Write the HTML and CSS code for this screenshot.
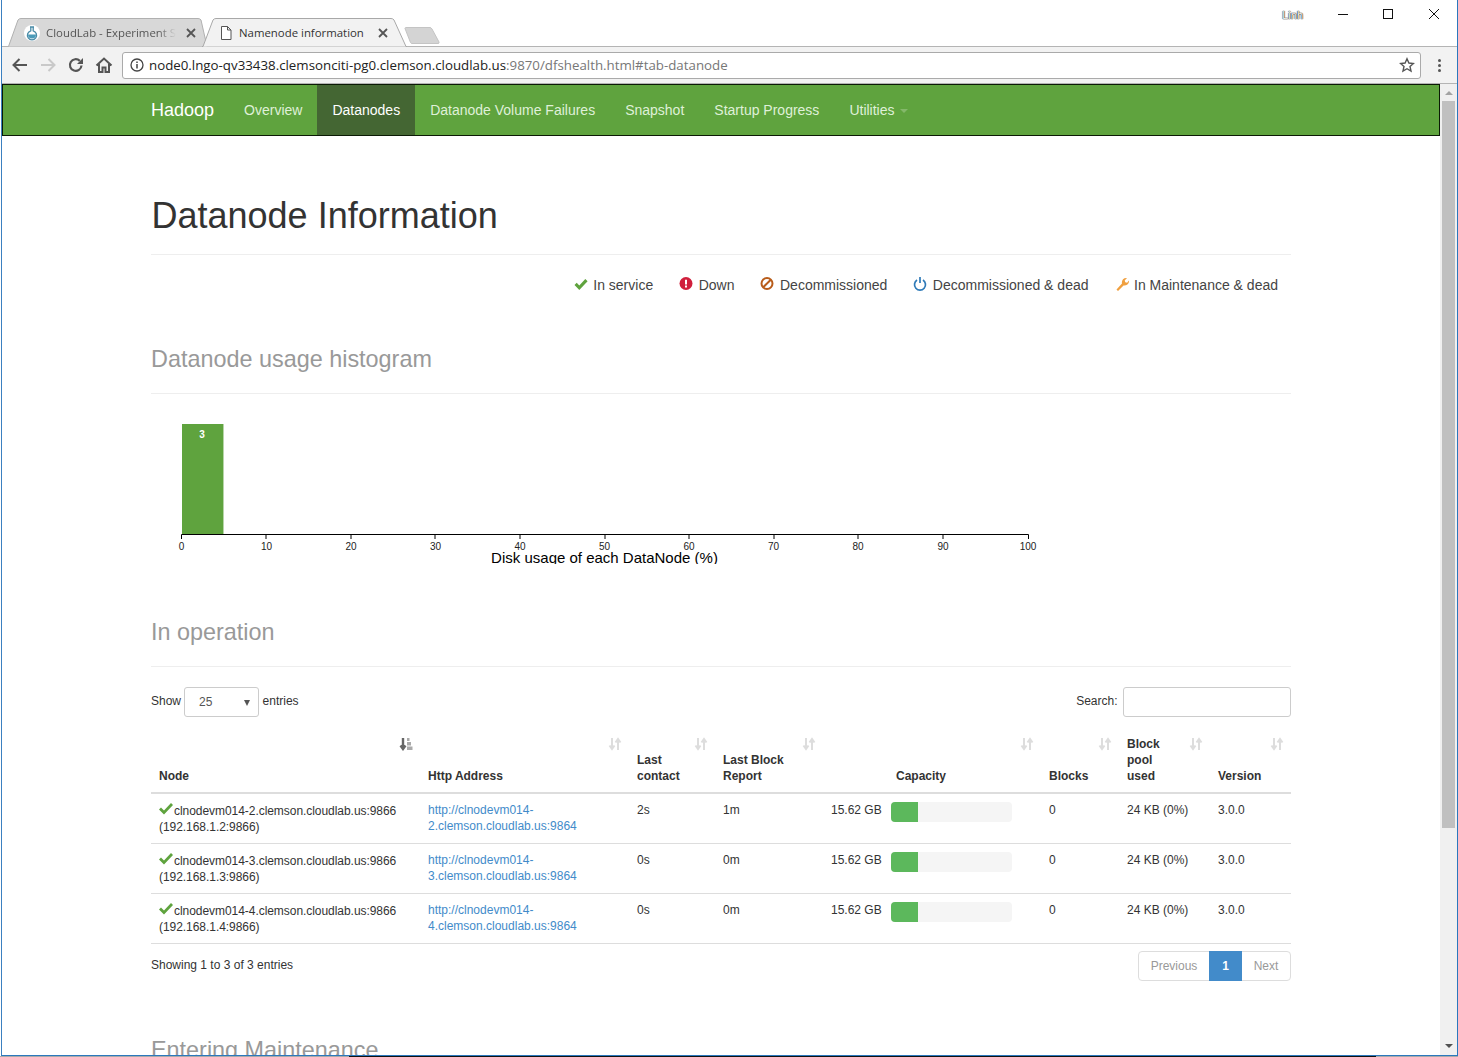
FILE: index.html
```html
<!DOCTYPE html>
<html lang="en">
<head>
  <meta charset="UTF-8">
  <title>Namenode information</title>
  <link rel="stylesheet" href="styles.css">
</head>
<body>
  <div class="window">
    <!-- Browser tabs and window buttons -->
    <div class="tabstrip">
      <div class="tab tab-inactive">
        <svg class="tab-shape" width="199" height="29" viewBox="0 0 199 29"><path d="M0.5 28.5 L10 2 Q11 0.5 13 0.5 L190 0.5 Q192 0.5 193 2 L199 28.5" fill="#d8d8d8" stroke="#b0b0b0"/></svg>
        <svg class="favicon" width="16" height="16" viewBox="0 0 16 16"><circle cx="8" cy="8" r="8" fill="#fff"/><path d="M6 2h4M6.8 2.500v3.300a4.600 4.600 0 1 0 2.400 0V2.500" fill="none" stroke="#4a8ca8" stroke-width="1.300"/><path d="M4 9.500h8a4 4 0 1 1-8 0z" fill="#4a9ab8"/></svg>
        <span class="tab-title tab-title-faded">CloudLab - Experiment S</span>
        <svg class="tab-close" width="10" height="10" viewBox="0 0 10 10"><path d="M1 1l8 8M9 1l-8 8" stroke="#555" stroke-width="1.800"/></svg>
      </div>
      <div class="tab tab-active">
        <svg class="tab-shape" width="205" height="29" viewBox="0 0 205 29"><path d="M0 28.5 L1 28.5 L11 2 Q12 0.5 14 0.5 L189 0.5 Q191 0.5 192 2 L204 28.5 L205 28.5" fill="#f2f2f2" stroke="#a8a8a8"/></svg>
        <svg class="favicon" width="16" height="16" viewBox="0 0 16 16"><path d="M3.500 1.500h6l3.500 3.500v9.500h-9.500zM9.500 1.500v3.500h3.500" fill="#fff" stroke="#555"/></svg>
        <span class="tab-title">Namenode information</span>
        <svg class="tab-close" width="10" height="10" viewBox="0 0 10 10"><path d="M1 1l8 8M9 1l-8 8" stroke="#555" stroke-width="1.800"/></svg>
      </div>
      <svg class="new-tab" width="36" height="18" viewBox="0 0 36 18"><path d="M1 1.500 Q1 0.500 2 0.500 L26 0.500 Q27 0.500 28 2 L35 15 Q35.500 16.500 34 16.500 L8 16.500 Q7 16.500 6.500 15.500z" fill="#d4d4d4" stroke="#c4c4c4"/></svg>
      <div class="spacer"></div>
      <span class="user-name">Linh</span>
      <div class="win-buttons">
        <svg width="12" height="12" viewBox="0 0 12 12"><path d="M1 6.500h10" stroke="#111"/></svg>
        <svg width="12" height="12" viewBox="0 0 12 12"><rect x="0.500" y="1.500" width="9" height="9" fill="none" stroke="#111"/></svg>
        <svg width="12" height="12" viewBox="0 0 12 12"><path d="M1 1l10 10M11 1L1 11" stroke="#111"/></svg>
      </div>
    </div>

    <!-- Address bar -->
    <div class="toolbar">
      <svg class="tool-icon" width="18" height="18" viewBox="0 0 18 18"><path d="M16 9H3M8.500 3L2.500 9l6 6" fill="none" stroke="#555" stroke-width="2"/></svg>
      <svg class="tool-icon" width="18" height="18" viewBox="0 0 18 18"><path d="M2 9h13M9.500 3l6 6-6 6" fill="none" stroke="#c9c9c9" stroke-width="2"/></svg>
      <svg class="tool-icon" width="18" height="18" viewBox="0 0 18 18"><path d="M14.500 9.500A5.800 5.800 0 1 1 12.800 4.900" fill="none" stroke="#555" stroke-width="2.200"/><path d="M10 8h6V2z" fill="#555"/></svg>
      <svg class="tool-icon" width="18" height="18" viewBox="0 0 18 18"><path d="M1.500 9.500L9 2.500l7.500 7M4 8v8h3.500v-4.500h3V16H14V8" fill="none" stroke="#555" stroke-width="2"/></svg>
      <div class="omnibox">
        <svg class="info-icon" width="14" height="14" viewBox="0 0 14 14"><circle cx="7" cy="7" r="6" fill="none" stroke="#444" stroke-width="1.300"/><path d="M7 6v4.500M7 3.500v1.500" stroke="#444" stroke-width="1.500"/></svg>
        <span class="url"><span class="url-host">node0.lngo-qv33438.clemsonciti-pg0.clemson.cloudlab.us</span>:9870/dfshealth.html#tab-datanode</span>
        <svg class="star-icon" width="16" height="16" viewBox="0 0 16 16"><path d="M8 1.800l1.900 4.200 4.500 0.500-3.400 3 1 4.500L8 11.700 4 14l1-4.500-3.400-3 4.500-0.500z" fill="none" stroke="#555" stroke-width="1.400"/></svg>
      </div>
      <div class="menu-dots"><i></i><i></i><i></i></div>
    </div>

    <div class="viewport">
      <div class="page">
        <nav class="navbar">
          <div class="nav-inner">
            <a class="brand">Hadoop</a>
            <a class="nav-link">Overview</a>
            <a class="nav-link nav-current">Datanodes</a>
            <a class="nav-link">Datanode Volume Failures</a>
            <a class="nav-link">Snapshot</a>
            <a class="nav-link">Startup Progress</a>
            <a class="nav-link">Utilities <b class="caret"></b></a>
          </div>
        </nav>

        <div class="container">
          <div class="page-header">
            <h1>Datanode Information</h1>
          </div>

          <!-- Legend -->
          <ul class="legend">
            <li>
              <svg class="icon" width="14" height="14" viewBox="0 0 14 14"><path d="M0.500 8l2.200-2.200 2.600 2.600 6-6.400 2.300 2.300-8.300 8.700z" fill="#5fa33e"/></svg>
              In service
            </li>
            <li>
              <svg class="icon" width="14" height="14" viewBox="0 0 14 14"><circle cx="7" cy="6.500" r="6.500" fill="#d01f3c"/><path d="M7 2.800v4.600M7 8.600v2" stroke="#fff" stroke-width="2"/></svg>
              Down
            </li>
            <li>
              <svg class="icon" width="14" height="14" viewBox="0 0 14 14"><circle cx="7" cy="6.500" r="5.500" fill="none" stroke="#b85c1a" stroke-width="2"/><path d="M3.200 10.300l7.600-7.600" stroke="#b85c1a" stroke-width="2"/></svg>
              Decommissioned
            </li>
            <li>
              <svg class="icon" width="14" height="14" viewBox="0 0 14 14"><path d="M4 3A5.500 5.500 0 1 0 10 3" fill="none" stroke="#2f7ab8" stroke-width="1.700"/><path d="M7 0v6" stroke="#2f7ab8" stroke-width="1.700"/></svg>
              Decommissioned &amp; dead
            </li>
            <li>
              <svg class="icon" width="14" height="14" viewBox="0 0 14 14"><path d="M1.500 12.500L7 6.500C6.300 3.500 8.500 0.500 12 1L9.700 3.500l0.600 1.800 1.800 0.500L14 3.500c0.400 3.300-2.500 5.500-5.500 5L3 14z" fill="#f0a040"/></svg>
              In Maintenance &amp; dead
            </li>
          </ul>

          <div class="section-header section-chart">
            <h2>Datanode usage histogram</h2>
          </div>

          <!-- Histogram -->
          <div class="histogram">
            <svg width="900" height="141" viewBox="0 0 900 141">
              <rect x="31" y="1" width="41" height="110" fill="#5fa33e"/>
              <rect x="72" y="1" width="1" height="110" fill="#b7d5a8"/>
              <text x="51" y="15" class="bar-label" text-anchor="middle">3</text>
              <path d="M30.500 116V111.500H877.500V116" fill="none" stroke="#000"/>
              <path d="M115 111v5M200 111v5M284 111v5M369 111v5M454 111v5M538 111v5M623 111v5M707 111v5M792 111v5" stroke="#000"/>
              <g class="tick-labels" text-anchor="middle">
                <text x="30.500" y="127">0</text>
                <text x="115.500" y="127">10</text>
                <text x="200" y="127">20</text>
                <text x="284.500" y="127">30</text>
                <text x="369" y="127">40</text>
                <text x="453.500" y="127">50</text>
                <text x="538" y="127">60</text>
                <text x="622.500" y="127">70</text>
                <text x="707" y="127">80</text>
                <text x="792" y="127">90</text>
                <text x="877" y="127">100</text>
              </g>
              <text x="453.500" y="140" class="axis-title" text-anchor="middle">Disk usage of each DataNode (%)</text>
            </svg>
          </div>

          <div class="section-header section-table">
            <h2>In operation</h2>
          </div>

          <!-- Table controls -->
          <div class="table-controls">
            <label class="length-control">Show
              <span class="fake-select">25<i class="select-arrow"></i></span>
              entries</label>
            <label class="search-control">Search: <input type="text" class="search-input"></label>
          </div>

          <table class="nodes">
            <colgroup>
              <col class="col-node"><col class="col-http"><col class="col-contact"><col class="col-report">
              <col class="col-capacity"><col class="col-blocks"><col class="col-pool"><col class="col-version">
            </colgroup>
            <thead>
              <tr>
                <th>Node
                  <svg class="sort sort-active" width="14" height="14" viewBox="0 0 14 14"><path d="M4 1v10M1.500 8.500L4 12l2.500-3.500" fill="none" stroke="#666" stroke-width="2.400"/><path d="M8 1h2.500v3H8zM8 5h4v3.500H8zM8 9.500h5.500V13H8z" fill="#aaa"/></svg>
                </th>
                <th>Http Address
                  <svg class="sort" width="14" height="14" viewBox="0 0 14 14"><path d="M4 1v10M1.500 8.500L4 12l2.500-3.500M10 13V3M7.500 5.500L10 2l2.500 3.500" fill="none" stroke="#ddd" stroke-width="2"/></svg>
                </th>
                <th>Last contact
                  <svg class="sort" width="14" height="14" viewBox="0 0 14 14"><path d="M4 1v10M1.500 8.500L4 12l2.500-3.500M10 13V3M7.500 5.500L10 2l2.500 3.500" fill="none" stroke="#ddd" stroke-width="2"/></svg>
                </th>
                <th>Last Block Report
                  <svg class="sort" width="14" height="14" viewBox="0 0 14 14"><path d="M4 1v10M1.500 8.500L4 12l2.500-3.500M10 13V3M7.500 5.500L10 2l2.500 3.500" fill="none" stroke="#ddd" stroke-width="2"/></svg>
                </th>
                <th class="th-center">Capacity
                  <svg class="sort" width="14" height="14" viewBox="0 0 14 14"><path d="M4 1v10M1.500 8.500L4 12l2.500-3.500M10 13V3M7.500 5.500L10 2l2.500 3.500" fill="none" stroke="#ddd" stroke-width="2"/></svg>
                </th>
                <th>Blocks
                  <svg class="sort" width="14" height="14" viewBox="0 0 14 14"><path d="M4 1v10M1.500 8.500L4 12l2.500-3.500M10 13V3M7.500 5.500L10 2l2.500 3.500" fill="none" stroke="#ddd" stroke-width="2"/></svg>
                </th>
                <th>Block pool used
                  <svg class="sort" width="14" height="14" viewBox="0 0 14 14"><path d="M4 1v10M1.500 8.500L4 12l2.500-3.500M10 13V3M7.500 5.500L10 2l2.500 3.500" fill="none" stroke="#ddd" stroke-width="2"/></svg>
                </th>
                <th>Version
                  <svg class="sort" width="14" height="14" viewBox="0 0 14 14"><path d="M4 1v10M1.500 8.500L4 12l2.500-3.500M10 13V3M7.500 5.500L10 2l2.500 3.500" fill="none" stroke="#ddd" stroke-width="2"/></svg>
                </th>
              </tr>
            </thead>
            <tbody>
              <tr>
                <td><svg class="check" width="14" height="13" viewBox="0 0 14 13"><path d="M0 7.500l2-2 3 3 7-7.500 2 2-9 9.500z" fill="#5fa33e"/></svg>clnodevm014-2.clemson.cloudlab.us:9866 (192.168.1.2:9866)</td>
                <td><a class="link">http://clnodevm014-2.clemson.cloudlab.us:9864</a></td>
                <td>2s</td>
                <td>1m</td>
                <td><div class="capacity"><span>15.62 GB</span><div class="progress"><div class="progress-bar"></div></div></div></td>
                <td>0</td>
                <td>24 KB (0%)</td>
                <td>3.0.0</td>
              </tr>
              <tr>
                <td><svg class="check" width="14" height="13" viewBox="0 0 14 13"><path d="M0 7.500l2-2 3 3 7-7.500 2 2-9 9.500z" fill="#5fa33e"/></svg>clnodevm014-3.clemson.cloudlab.us:9866 (192.168.1.3:9866)</td>
                <td><a class="link">http://clnodevm014-3.clemson.cloudlab.us:9864</a></td>
                <td>0s</td>
                <td>0m</td>
                <td><div class="capacity"><span>15.62 GB</span><div class="progress"><div class="progress-bar"></div></div></div></td>
                <td>0</td>
                <td>24 KB (0%)</td>
                <td>3.0.0</td>
              </tr>
              <tr>
                <td><svg class="check" width="14" height="13" viewBox="0 0 14 13"><path d="M0 7.500l2-2 3 3 7-7.500 2 2-9 9.500z" fill="#5fa33e"/></svg>clnodevm014-4.clemson.cloudlab.us:9866 (192.168.1.4:9866)</td>
                <td><a class="link">http://clnodevm014-4.clemson.cloudlab.us:9864</a></td>
                <td>0s</td>
                <td>0m</td>
                <td><div class="capacity"><span>15.62 GB</span><div class="progress"><div class="progress-bar"></div></div></div></td>
                <td>0</td>
                <td>24 KB (0%)</td>
                <td>3.0.0</td>
              </tr>
            </tbody>
          </table>

          <!-- Table footer -->
          <div class="table-footer">
            <div class="table-info">Showing 1 to 3 of 3 entries</div>
            <ul class="pagination">
              <li class="page-prev">Previous</li>
              <li class="page-current">1</li>
              <li class="page-next">Next</li>
            </ul>
          </div>

          <div class="section-header section-maintenance">
            <h2>Entering Maintenance</h2>
          </div>
        </div>
      </div>

      <div class="scrollbar">
        <i class="scroll-up"></i>
        <div class="scroll-track"><div class="scroll-thumb"></div></div>
        <i class="scroll-down"></i>
      </div>
    </div>
  </div>
  <div class="desktop-edge"></div>
</body>
</html>
```

FILE: styles.css
```css
/* Base styles */
html, body {
  margin: 0;
  padding: 0;
  height: 100%;
  overflow: hidden;
}

body {
  font-family: "Liberation Sans", Arial, sans-serif;
  font-size: 14px;
  color: #333;
  background-color: #fff;
}

.window {
  height: 1056px;
  box-sizing: border-box;
  display: flex;
  flex-direction: column;
  margin-left: 1px;
  border-left: 1px solid #3b80c0;
  border-right: 1px solid #2b78bd;
  border-bottom: 1px solid #2b78bd;
  background-color: #fff;
}

.desktop-edge {
  height: 1px;
  background: linear-gradient(to right, #aaa 349px, #111 349px, #111 1376px, #aaa 1376px);
}

/* Tab strip */
.tabstrip {
  height: 46px;
  flex: none;
  display: flex;
  align-items: flex-end;
  border-bottom: 1px solid #b4b4b4;
  padding-left: 6px;
  font-family: "Open Sans", sans-serif;
  font-size: 11.4px;
}

.tab {
  position: relative;
  height: 29px;
  margin-bottom: -1px;
  display: flex;
  align-items: center;
  box-sizing: border-box;
}

.tab-shape {
  position: absolute;
  left: 0;
  top: 0;
}

.tab-inactive {
  width: 199px;
  padding-left: 16px;
  color: #555;
}

.tab-active {
  width: 205px;
  margin-left: -5px;
  padding-left: 16px;
  color: #333;
}

.favicon {
  position: relative;
  flex: none;
}

.tab-title {
  position: relative;
  white-space: nowrap;
  overflow: hidden;
}

.tab-inactive .tab-title {
  width: 130px;
  margin-left: 6px;
}

.tab-title-faded {
  -webkit-mask-image: linear-gradient(to right, #000 112px, transparent 130px);
  mask-image: linear-gradient(to right, #000 112px, transparent 130px);
}

.tab-active .tab-title {
  width: 127px;
  margin-left: 5px;
}

.tab-close {
  position: relative;
  flex: none;
}

.tab-inactive .tab-close {
  margin-left: 10px;
}

.tab-active .tab-close {
  margin-left: 12px;
}

.new-tab {
  margin: 0 0 1px -3px;
}

.spacer {
  flex: 1;
}

.user-name {
  align-self: flex-start;
  margin-top: 9px;
  margin-right: 34px;
  font-family: "Liberation Sans", sans-serif;
  font-size: 11px;
  color: #fff;
  text-shadow: 0 0 1px #222, 0 0 1px #222, 0 0 1px #222;
}

.win-buttons {
  align-self: flex-start;
  display: flex;
  gap: 33.5px;
  margin-top: 8px;
  margin-right: 17px;
}

/* Address bar */
.toolbar {
  height: 36px;
  flex: none;
  display: flex;
  align-items: center;
  padding: 0 0 0 9px;
  background-color: #f2f2f2;
  border-bottom: 1px solid #b4b4b4;
}

.tool-icon {
  flex: none;
  margin-right: 10px;
}

.omnibox {
  flex: 1;
  height: 27px;
  box-sizing: border-box;
  display: flex;
  align-items: center;
  margin-left: -1px;
  padding: 0 5px 0 7px;
  background-color: #fff;
  border: 1px solid #aaa;
  border-radius: 3px;
}

.info-icon {
  flex: none;
}

.url {
  flex: 1;
  margin-left: 5px;
  font-family: "Open Sans", sans-serif;
  font-size: 13.3px;
  color: #777;
  white-space: nowrap;
}

.url-host {
  color: #222;
}

.menu-dots {
  width: 36px;
  flex: none;
  display: flex;
  flex-direction: column;
  align-items: center;
  gap: 2px;
}

.menu-dots i {
  width: 3px;
  height: 3px;
  border-radius: 50%;
  background-color: #555;
}

/* Page area */
.viewport {
  flex: 1;
  min-height: 0;
  display: flex;
}

.page {
  flex: 1;
  min-width: 0;
  overflow: hidden;
}

/* Navbar */
.navbar {
  height: 52px;
  box-sizing: border-box;
  background-color: #5fa33e;
  border: 1px solid #0b1a05;
}

.nav-inner {
  width: 1140px;
  height: 100%;
  margin: 0 auto;
  display: flex;
}

.brand {
  padding-right: 15px;
  font-size: 18px;
  line-height: 50px;
  color: #fff;
}

.nav-link {
  padding: 0 15px;
  line-height: 50px;
  color: #dff0d8;
}

.nav-current {
  background-color: #446633;
  color: #fff;
}

.caret {
  display: inline-block;
  width: 0;
  height: 0;
  margin-left: 2px;
  vertical-align: middle;
  border-top: 4px solid #84b86a;
  border-left: 4px solid transparent;
  border-right: 4px solid transparent;
}

/* Container layout */
.container {
  width: 1140px;
  margin-left: 149px;
}

.page-header {
  margin-top: 60px;
  padding-bottom: 18px;
  border-bottom: 1px solid #eee;
}

h1 {
  margin: 0;
  padding-left: 0.5px;
  font-size: 36px;
  font-weight: 500;
  line-height: 40px;
  color: #333;
}

h2 {
  margin: 0;
  font-size: 23.4px;
  font-weight: 500;
  line-height: 26px;
  color: #999;
}

.section-header {
  padding-bottom: 21px;
  border-bottom: 1px solid #eee;
}

.section-chart {
  margin-top: 51px;
}

.section-table {
  margin-top: 53px;
}

.section-maintenance {
  margin-top: 56px;
}

/* Legend */
.legend {
  list-style: none;
  margin: 20px 0 0;
  padding: 0 13px 0 0;
  display: flex;
  justify-content: flex-end;
  gap: 26px;
  line-height: 20px;
  color: #444;
}

.legend li {
  display: flex;
  align-items: center;
  gap: 5.5px;
}

.icon {
  flex: none;
  margin-top: -2px;
}

/* Histogram */
.histogram {
  margin-top: 29px;
  height: 143px;
}

.histogram svg {
  display: block;
}

.bar-label {
  font-size: 10px;
  font-weight: bold;
  fill: #fff;
}

.tick-labels {
  font-size: 10px;
  fill: #222;
}

.axis-title {
  font-size: 15px;
  fill: #000;
}

/* Table controls */
.table-controls {
  margin-top: 20px;
  display: flex;
  justify-content: space-between;
  font-size: 12px;
}

.length-control,
.search-control {
  display: flex;
  align-items: flex-start;
  line-height: 28px;
}

.fake-select {
  position: relative;
  width: 75px;
  height: 30px;
  box-sizing: border-box;
  margin: 0 3.5px 0 3px;
  padding-left: 14px;
  line-height: 29px;
  border: 1px solid #ccc;
  border-radius: 3px;
  color: #555;
}

.select-arrow {
  position: absolute;
  right: 8px;
  top: 12px;
  border-top: 6px solid #555;
  border-left: 3px solid transparent;
  border-right: 3px solid transparent;
}

.search-input {
  width: 168px;
  height: 30px;
  box-sizing: border-box;
  margin: 0 0 0 5.5px;
  border: 1px solid #ccc;
  border-radius: 3px;
}

/* Data table */
.nodes {
  width: 1140px;
  margin-top: 11px;
  table-layout: fixed;
  border-collapse: collapse;
  font-size: 12px;
  line-height: 16px;
}

.col-node { width: 269px; }
.col-http { width: 209px; }
.col-contact { width: 86px; }
.col-report { width: 108px; }
.col-capacity { width: 218px; }
.col-blocks { width: 78px; }
.col-pool { width: 91px; }
.col-version { width: 81px; }

th {
  position: relative;
  padding: 8px 30px 8px 8px;
  text-align: left;
  vertical-align: bottom;
  border-bottom: 2px solid #ddd;
}

.th-center {
  text-align: center;
}

.sort {
  position: absolute;
  right: 7px;
  top: 9px;
}

td {
  height: 50px;
  box-sizing: border-box;
  padding: 8px 8px 0;
  vertical-align: top;
  border-bottom: 1px solid #ddd;
}

td:first-child {
  letter-spacing: -0.05px;
}

.check {
  margin-right: 1px;
}

.link {
  color: #428bca;
}

.capacity {
  display: flex;
  justify-content: space-between;
  gap: 9.5px;
  padding-right: 21px;
}

.capacity span {
  flex: none;
}

.progress {
  flex: 1;
  height: 20px;
  overflow: hidden;
  background-color: #f5f5f5;
  border-radius: 4px;
}

.progress-bar {
  width: 27px;
  height: 100%;
  background-color: #5cb85c;
}

/* Table footer */
.table-footer {
  margin-top: 7px;
  display: flex;
  justify-content: space-between;
  align-items: center;
  font-size: 12px;
}

.table-info {
  padding-bottom: 2px;
}

.pagination {
  list-style: none;
  margin: 0;
  padding: 0;
  height: 30px;
  display: flex;
  line-height: 28px;
  color: #999;
  border: 1px solid #ddd;
  border-radius: 4px;
  box-sizing: border-box;
}

.page-prev {
  width: 70px;
  text-align: center;
}

.page-current {
  width: 33px;
  margin: -1px 0;
  line-height: 30px;
  text-align: center;
  background-color: #428bca;
  color: #fff;
  font-weight: bold;
}

.page-next {
  width: 48px;
  text-align: center;
}

/* Scrollbar */
.scrollbar {
  width: 17px;
  flex: none;
  display: flex;
  flex-direction: column;
  align-items: center;
  background-color: #f0f0f0;
}

.scroll-up,
.scroll-down {
  width: 0;
  height: 0;
  margin: 7px 0;
  border-left: 4px solid transparent;
  border-right: 4px solid transparent;
}

.scroll-up {
  border-bottom: 4px solid #a3a3a3;
}

.scroll-down {
  border-top: 4px solid #505050;
}

.scroll-track {
  flex: 1;
  width: 100%;
}

.scroll-thumb {
  width: 13px;
  height: 727px;
  margin: -1px auto 0;
  background-color: #c0c0c0;
}
```
